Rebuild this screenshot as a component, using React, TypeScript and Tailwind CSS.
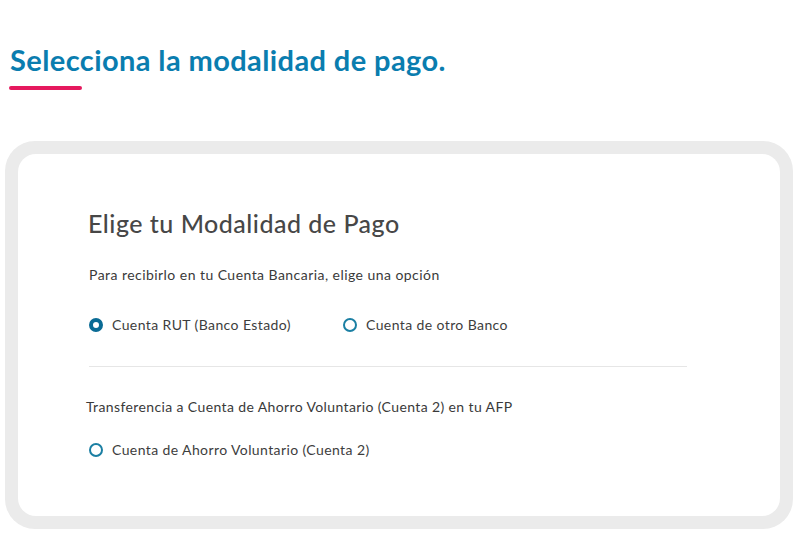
import React, { useState } from 'react'

const font = { fontFamily: 'Lato, "Open Sans", sans-serif' }

function Radio({ checked, label, onClick }: { checked: boolean; label: string; onClick: () => void }) {
  return (
    <button type="button" onClick={onClick} className="flex items-center gap-[9px] text-left">
      {checked ? (
        <span className="w-[14px] h-[14px] rounded-full border-[4px] border-[#0a6b95] bg-white" />
      ) : (
        <span className="w-[14px] h-[14px] rounded-full border-2 border-[#1b7fa3] bg-white" />
      )}
      <span className="text-[14px] leading-[18px] tracking-[0.4px] text-[#3d3d3d]">{label}</span>
    </button>
  )
}

export default function App() {
  const [sel, setSel] = useState('rut')

  return (
    <div className="w-[800px] h-[543px] bg-white overflow-hidden" style={font}>
      <div className="pt-[42px] pl-[10px]">
        <h1 className="text-[29px] leading-[36px] font-bold text-[#0a7daf] tracking-[0.4px]">
          Selecciona la modalidad de pago.
        </h1>
        <div className="mt-[8px] ml-[-1px] w-[73px] h-[4px] bg-[#e5195e] rounded-sm" />
      </div>

      <div className="mt-[51px] mx-[5px] w-[788px] h-[388px] bg-[#ebebeb] rounded-[30px] p-[13px]">
        <div className="w-full h-full bg-white rounded-[18px] pl-[70px] pt-[54px]">
          <h2 className="text-[25px] leading-[30px] tracking-[0.5px] text-[#474747] font-medium">Elige tu Modalidad de Pago</h2>
          <p className="mt-[28px] ml-[1px] text-[14px] leading-[18px] tracking-[0.45px] text-[#3a3a3a]">
            Para recibirlo en tu Cuenta Bancaria, elige una opción
          </p>
          <div className="mt-[32px] ml-[1px] flex items-center">
            <div className="w-[254px]">
              <Radio checked={sel === 'rut'} label="Cuenta RUT (Banco Estado)" onClick={() => setSel('rut')} />
            </div>
            <Radio checked={sel === 'otro'} label="Cuenta de otro Banco" onClick={() => setSel('otro')} />
          </div>
          <div className="mt-[32px] ml-[1px] w-[598px] h-px bg-[#e6e6e6]" />
          <p className="mt-[31px] ml-[-2px] text-[14px] leading-[18px] tracking-[0.38px] text-[#3a3a3a]">
            Transferencia a Cuenta de Ahorro Voluntario (Cuenta 2) en tu AFP
          </p>
          <div className="mt-[25px] ml-[1px] flex items-center">
            <Radio checked={sel === 'afp'} label="Cuenta de Ahorro Voluntario (Cuenta 2)" onClick={() => setSel('afp')} />
          </div>
        </div>
      </div>
    </div>
  )
}
